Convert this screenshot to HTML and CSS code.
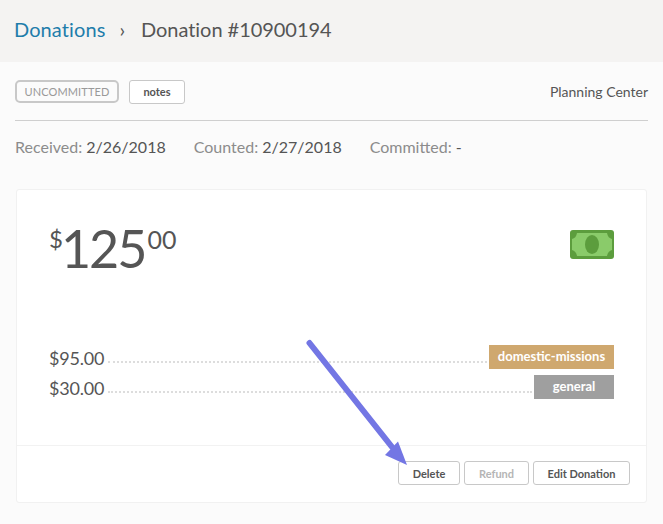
FILE: index.html
```html
<!DOCTYPE html>
<html lang="en">
<head>
<meta charset="utf-8">
<title>Donation #10900194</title>
<link rel="stylesheet" href="styles.css">
</head>
<body>
<header class="topbar">
  <a class="crumb-link">Donations</a>
  <span class="crumb-sep">›</span>
  <span class="crumb-current">Donation #10900194</span>
</header>
<main class="content">
  <div class="status-row">
    <span class="status-badge">UNCOMMITTED</span>
    <button class="btn btn-notes">notes</button>
    <span class="source">Planning Center</span>
  </div>
  <div class="dates">
    <span class="date"><span class="date-label">Received:</span> 2/26/2018</span>
    <span class="date"><span class="date-label">Counted:</span> 2/27/2018</span>
    <span class="date"><span class="date-label">Committed:</span> -</span>
  </div>
  <section class="card">
    <div class="card-body">
      <div class="amount-row">
        <div class="amount"><span class="amount-sup amount-currency">$</span><span class="amount-main">125</span><span class="amount-sup amount-cents">00</span></div>
        <svg class="cash-icon" width="44" height="29" viewBox="0 0 44 29">
          <rect width="44" height="29" rx="3" fill="#5c9d3d"/>
          <path d="M7 3H37C37.5 6.5 39.5 8.5 42 9V20C39.5 20.500 37.500 22.500 37 26H7C6.500 22.500 4.500 20.500 2 20V9C4.500 8.500 6.500 6.500 7 3Z" fill="#8acb6a"/>
          <ellipse cx="22" cy="14.500" rx="7" ry="9.500" fill="#5c9d3d"/>
        </svg>
      </div>
      <div class="fund-row">
        <span class="fund-amount">$95.00</span>
        <span class="leader"></span>
        <span class="fund-tag tag-tan">domestic-missions</span>
      </div>
      <div class="fund-row">
        <span class="fund-amount">$30.00</span>
        <span class="leader"></span>
        <span class="fund-tag tag-grey">general</span>
      </div>
    </div>
    <footer class="card-footer">
      <button class="btn btn-action">Delete</button>
      <button class="btn btn-action btn-disabled">Refund</button>
      <button class="btn btn-action btn-edit">Edit Donation</button>
    </footer>
  </section>
</main>
<svg class="arrow" width="663" height="524" viewBox="0 0 663 524">
  <line x1="309.500" y1="343" x2="392" y2="447" stroke="#7376e4" stroke-width="6" stroke-linecap="round"/>
  <polygon points="407,465 385,455 398,441.500" fill="#7376e4"/>
</svg>
</body>
</html>
```

FILE: styles.css
```css
* { box-sizing: border-box; }
html, body { margin: 0; padding: 0; }
body {
  position: relative;
  width: 663px;
  height: 524px;
  overflow: hidden;
  background: #fbfbfb;
  color: #555;
  font-family: Lato, "Liberation Sans", sans-serif;
}
.topbar {
  display: flex;
  align-items: center;
  height: 62px;
  padding: 0 14px 5px;
  background: #f4f3f2;
  font-size: 20px;
}
.crumb-link { color: #1e7dab; letter-spacing: 0.1px; }
.crumb-sep { margin: 0 16px 0 14px; font-size: 20px; color: #555; }
.crumb-current { color: #555; letter-spacing: -0.05px; }
.content { padding: 18px 15px 0; }
.status-row {
  display: flex;
  align-items: center;
  height: 23px;
  margin-bottom: 17px;
}
.status-badge {
  display: flex;
  align-items: center;
  justify-content: center;
  width: 104px;
  height: 23px;
  border: 2px solid #c8c8c8;
  border-radius: 5px;
  color: #999;
  font-size: 11px;
  letter-spacing: 0.1px;
}
.btn {
  display: flex;
  align-items: center;
  justify-content: center;
  height: 24px;
  padding: 0;
  background: #fff;
  border: 1px solid #c8c8c8;
  border-radius: 3px;
  color: #555;
  font-family: inherit;
  font-size: 11px;
  font-weight: 700;
}
.btn-notes { width: 56px; margin-left: 10px; }
.source { margin-left: auto; font-size: 14px; color: #555; }
.dates {
  display: flex;
  gap: 28px;
  padding-top: 16px;
  height: 69px;
  border-top: 1px solid #cfcfcf;
  font-size: 16px;
  line-height: 19px;
  color: #555;
}
.date-label { color: #8c8c8c; }
.card {
  width: 631px;
  margin-left: 1px;
  height: 314px;
  background: #fff;
  border: 1px solid #f1f1f1;
  border-radius: 3px;
  display: flex;
  flex-direction: column;
}
.card-body { flex: 1; padding: 0 32px 0 32px; }
.amount-row {
  display: flex;
  justify-content: space-between;
  height: 155px;
  padding-top: 29px;
}
.amount { display: flex; align-items: flex-start; color: #555; line-height: 1; }
.amount-main { font-size: 52px; line-height: 60px; letter-spacing: -2px; margin-top: -1px; }
.amount-sup { font-size: 24px; line-height: 32px; margin-top: 4px; }
.amount-currency { letter-spacing: -2px; }
.amount-cents { margin-left: 2px; font-size: 25px; }
.cash-icon { margin-top: 11px; margin-right: 0; }
.fund-row {
  display: flex;
  align-items: center;
  height: 24px;
  margin-bottom: 6px;
}
.fund-amount { font-size: 18px; color: #555; letter-spacing: -0.2px; position: relative; top: 1px; }
.leader {
  flex: 1;
  margin: 10px 2px 0 4px;
  border-top: 2px dotted #ddd;
}
.fund-tag {
  display: flex;
  align-items: center;
  justify-content: center;
  height: 24px;
  padding-bottom: 2px;
  color: #fff;
  font-size: 13px;
  font-weight: 700;
}
.tag-tan { width: 125px; background: #cfa86f; }
.tag-grey { width: 80px; background: #9f9f9f; }
.card-footer {
  display: flex;
  justify-content: flex-end;
  gap: 4px;
  height: 57px;
  padding: 15px 16px 0 0;
  border-top: 1px solid #f2f2f2;
}
.btn-action { width: 62px; color: #555; }
.btn-disabled { width: 65px; color: #b5b5b5; }
.btn-edit { width: 97px; }
.arrow { position: absolute; left: 0; top: 0; pointer-events: none; }
```
